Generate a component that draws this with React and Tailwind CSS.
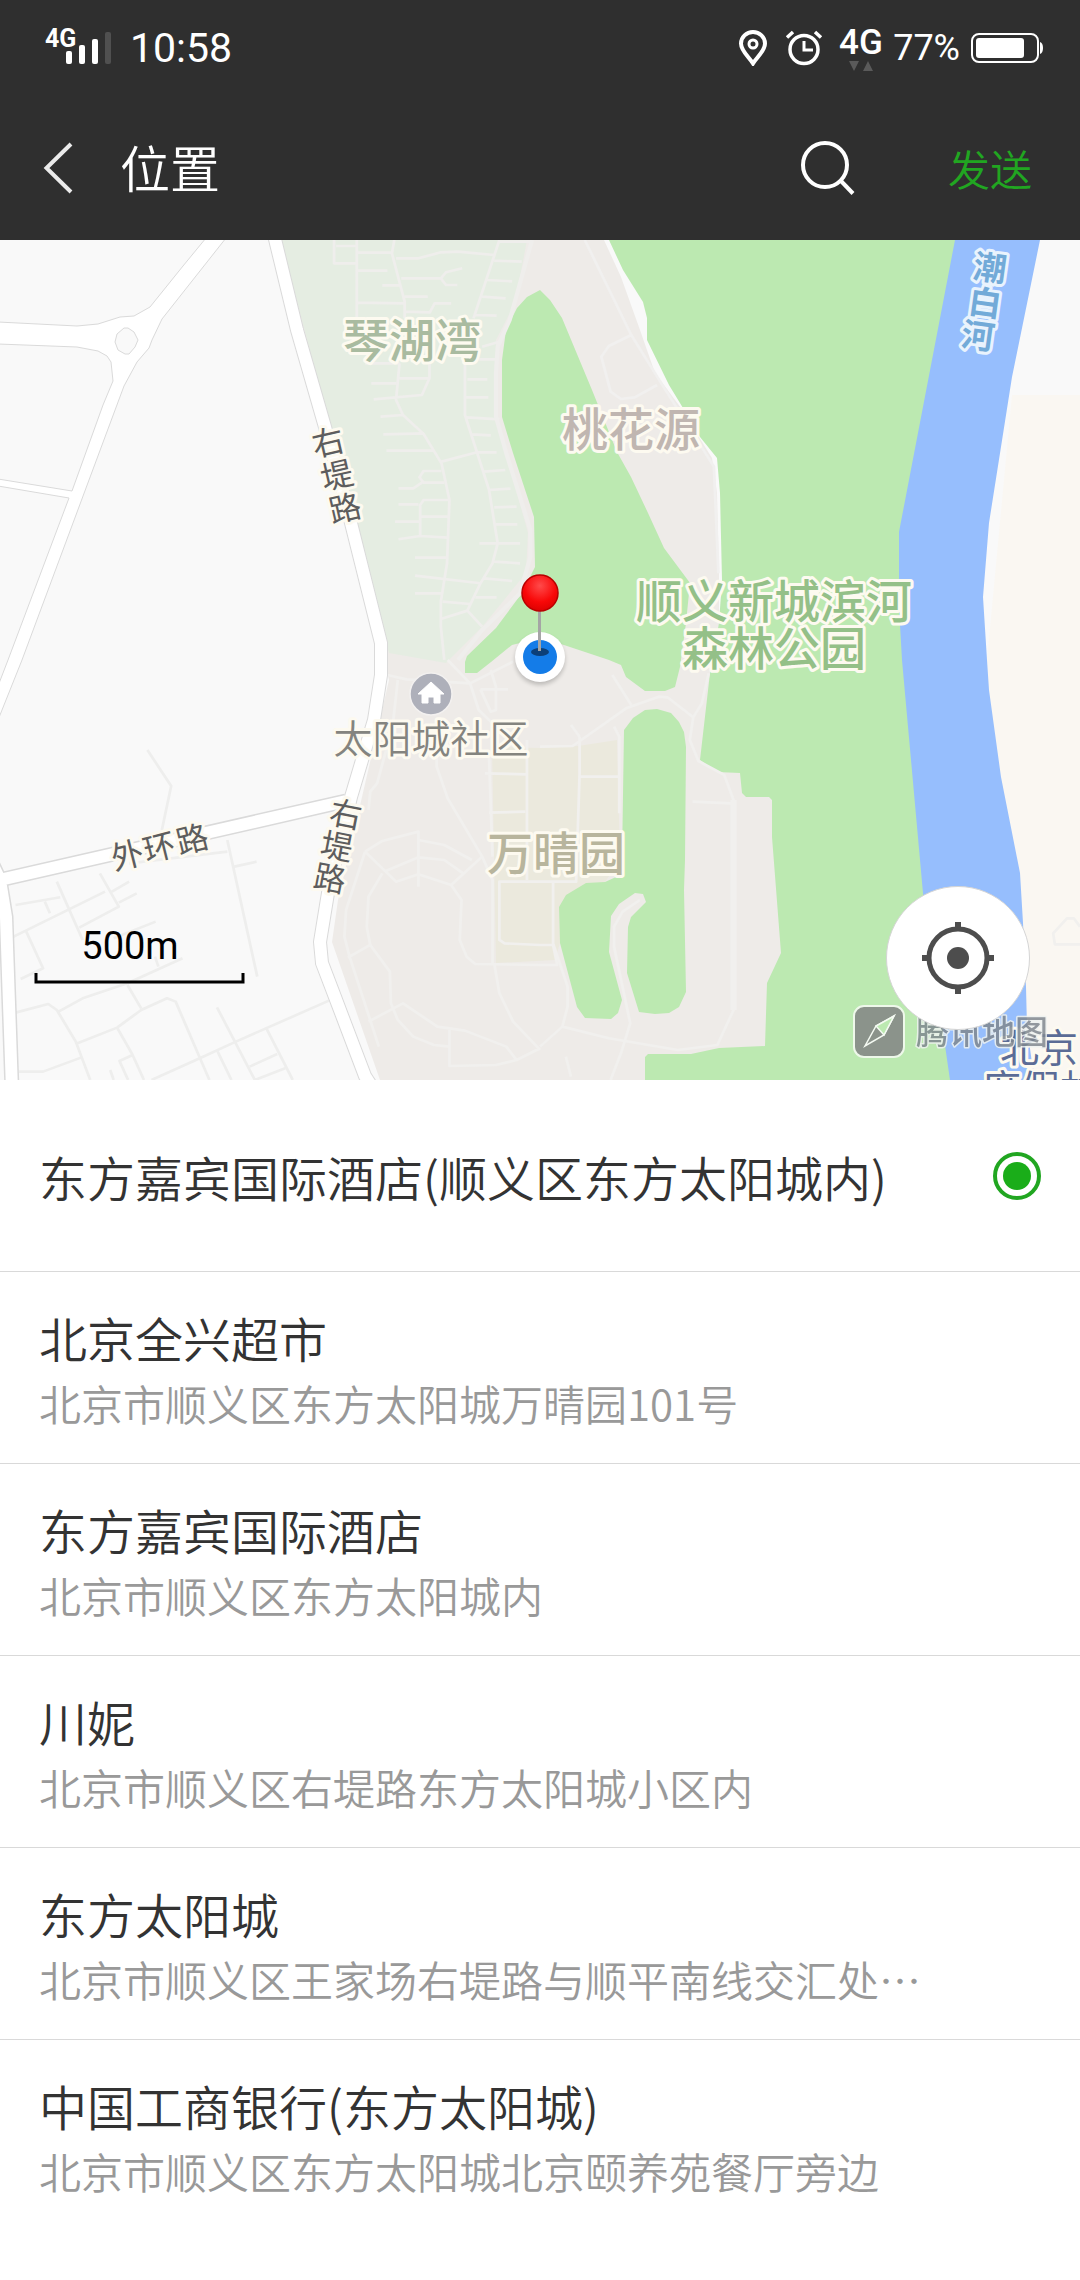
import { useState } from "react";

const places = [
  { id: 1, name: "东方嘉宾国际酒店(顺义区东方太阳城内)" },
  {
    id: 2,
    name: "北京全兴超市",
    address: "北京市顺义区东方太阳城万晴园101号",
  },
  {
    id: 3,
    name: "东方嘉宾国际酒店",
    address: "北京市顺义区东方太阳城内",
  },
  {
    id: 4,
    name: "川妮",
    address: "北京市顺义区右堤路东方太阳城小区内",
  },
  {
    id: 5,
    name: "东方太阳城",
    address: "北京市顺义区王家场右堤路与顺平南线交汇处…",
  },
  {
    id: 6,
    name: "中国工商银行(东方太阳城)",
    address: "北京市顺义区东方太阳城北京颐养苑餐厅旁边",
  },
];

const areaLabels = [
  { text: "琴湖湾", x: 412, y: 117, color: "#a9bba0" },
  { text: "桃花源", x: 631, y: 206, color: "#c0b6b1" },
  { text: "顺义新城滨河", x: 774, y: 378, color: "#94c088" },
  { text: "森林公园", x: 774, y: 425, color: "#94c088" },
  { text: "万晴园", x: 556, y: 630, color: "#b8b59d" },
];

const roadLabels = [
  { char: "右", x: 328, y: 202, rotate: -13 },
  { char: "堤", x: 337, y: 235, rotate: -13 },
  { char: "路", x: 345, y: 268, rotate: -13 },
  { char: "右", x: 346, y: 574, rotate: 11 },
  { char: "堤", x: 337, y: 606, rotate: 11 },
  { char: "路", x: 330, y: 638, rotate: 11 },
  { char: "外", x: 127, y: 615, rotate: -14 },
  { char: "环", x: 159, y: 607, rotate: -14 },
  { char: "路", x: 192, y: 599, rotate: -14 },
];

const riverLabels = [
  { char: "潮", x: 990, y: 28, rotate: 8 },
  { char: "白", x: 985, y: 63, rotate: 8 },
  { char: "河", x: 978, y: 96, rotate: 8 },
];

function StatusBar() {
  return (
    <div className="flex h-24 items-center justify-between pr-9 pl-11">
      <div className="flex items-center gap-[18px]">
        <svg viewBox="0 0 68 40" className="h-10 w-[68px] overflow-visible" fill="#fff">
          <text x="1" y="19" fontSize="25" fontWeight="700">
            4G
          </text>
          <rect x="22" y="23" width="6" height="13" rx="2" />
          <rect x="35" y="17" width="6" height="19" rx="2" />
          <rect x="48" y="11" width="6" height="25" rx="2" />
          <rect x="61" y="4" width="6" height="32" rx="2" fill="#505050" />
        </svg>
        <span className="text-[41px] leading-10">10:58</span>
      </div>
      <div className="flex items-center">
        <svg viewBox="0 0 28 36" className="mr-[18px] h-9 w-7" fill="none" stroke="#fff">
          <path d="M14 33.5C10 27 2 21 2 13.500A12 11.500 0 0 1 26 13.500C26 21 18 27 14 33.500Z" strokeWidth="4" />
          <circle cx="14" cy="14" r="4" strokeWidth="3" />
        </svg>
        <svg viewBox="0 0 38 36" className="mr-4 h-9 w-[38px]" fill="none" stroke="#fff">
          <circle cx="19" cy="19.500" r="14" strokeWidth="3.500" />
          <path d="M19 11V20H28" strokeWidth="3" />
          <path d="M2 7.500L8 2M36 7.500L30 2" strokeWidth="3.500" />
        </svg>
        <svg viewBox="0 0 46 48" className="mr-2 h-12 w-[46px] overflow-visible" fill="#fff">
          <text x="0" y="30" fontSize="35" fontWeight="500">
            4G
          </text>
          <path d="M10 37H20L15 47Z M24 47H34L29 37Z" fill="#5a5a5a" />
        </svg>
        <span className="text-4xl leading-10">77%</span>
        <svg viewBox="0 0 74 32" className="ml-2.5 h-8 w-[74px]" fill="none">
          <rect x="2" y="2" width="66" height="28" rx="7" stroke="#fff" strokeWidth="2" />
          <rect x="6" y="6" width="48" height="20" rx="3" fill="#fff" />
          <path d="M70 10Q73 11 73 16Q73 21 70 22Z" fill="#fff" />
        </svg>
      </div>
    </div>
  );
}

function NavBar() {
  return (
    <div className="flex h-36 items-center pr-12 pl-[42px]">
      <button type="button" aria-label="返回" className="mr-[46px]">
        <svg viewBox="0 0 32 52" className="h-[52px] w-8" fill="none">
          <path d="M29 2L4.500 26L29 50" stroke="#ebebeb" strokeWidth="4" />
        </svg>
      </button>
      <h1 className="grow pb-1 text-[50px] leading-[72px] font-[350]">位置</h1>
      <button type="button" aria-label="搜索" className="mr-[92px]">
        <svg viewBox="0 0 56 56" className="size-14" fill="none" stroke="#fff" strokeWidth="4">
          <circle cx="25" cy="25" r="22" />
          <path d="M41 41L53 53.500" />
        </svg>
      </button>
      <button type="button" className="text-[42px] leading-[60px] font-[350] text-[#21a621]">
        发送
      </button>
    </div>
  );
}

function MinorRoads() {
  return (
    <g fill="none" strokeWidth="8" strokeLinejoin="round">
      <g transform="scale(.3444 .3333)" stroke="#efeeec">
        <path d="M1036 0V235M970 0V70H1036M976 18H1036M1036 38H1140M1145 0L1138 40L1175 185V235M1150 55H1215L1280 37L1330 35L1435 45M1036 92H1125M1165 115H1280L1295 97L1342 85M1280 115L1295 135H1328M1110 136H1165M1036 188L1175 190M1175 170H1242M1175 215L1248 217L1262 190H1310" />
        <path d="M1450 0L1375 235M1450 5H1540M1435 62L1515 65M1415 120L1487 124M1400 170L1468 175M1380 225L1442 227M1400 320L1450 305M1060 370H1160M1390 358H1440" />
        <path d="M1160 370L1150 480L1170 525L1230 582L1282 670L1305 780L1298 970L1280 1085V1160L1290 1260M1078 430H1150M1160 415H1247M1247 370V415L1225 465L1085 478M1105 530L1170 525M1113 583L1230 580M1122 632H1260M1282 665L1385 637" />
        <path d="M1350 370V525L1385 637L1420 750L1445 910L1430 970L1395 1030L1357 1112L1280 1137M1357 1112L1400 1160M1357 418H1415M1350 472H1418M1355 532L1450 538M1370 583L1425 586M1385 637H1442M1405 695L1467 690M1420 750L1482 746M1435 802L1500 800M1440 853H1502M1392 910H1510M1435 965L1510 970M1405 1015L1487 1023" />
        <path d="M1205 1007L1395 1030M1205 953H1298M1205 1060H1285M1285 1085L1365 1092M1380 1072H1442M1282 693H1230L1218 712L1230 728H1290M1157 745H1200L1225 728M1157 793H1215M1303 780H1230L1220 795V890M1220 830H1303M1147 845H1220M1157 898L1220 888L1300 893" />
        <path d="M1545 0L1480 240L1445 320L1440 400V530L1470 640L1540 870V950L1510 1060L1400 1170L1330 1260" strokeWidth="12" />
      </g>
      <g transform="translate(540 0) scale(.3444 .3333)" stroke="#f1f0ef">
        <path d="M130 0L265 285L340 410L505 680L518 1000M265 285L200 318L178 350L205 455L235 477L275 472L340 435" />
      </g>
      <g transform="translate(0 420) scale(.3444 .3333)" stroke="#eeeeed">
        <path d="M428 270L497 378L470 510M375 610L660 575M660 540L747 950M680 620L745 605M290 640L345 740L230 803M165 665L240 840M45 735L175 712M130 725L145 760M375 665L325 695M397 700L345 728M305 695L75 812L0 850M75 812L125 925L60 957M452 785L330 835" />
        <path d="M530 895L370 970L240 1015L170 1055M370 975L410 1045M450 890L460 920M45 1058L140 1032L165 1050L220 1145L262 1260M225 1150L340 1103L410 1050L485 1015L510 1025L608 1260M340 1103L385 1185L418 1260M55 1235H125L235 1193M385 1185L347 1203L372 1260M320 1230L330 1260" />
        <path d="M440 1260L580 1195L685 1145L955 1022M630 1042L740 1260M775 1108L850 1260M725 1220L805 1182M740 1260L828 1225M632 1175L672 1260" />
      </g>
      <g transform="translate(0 420) scale(.3444 .3333)" stroke="#f1f0ee">
        <path d="M1125 45L1180 58L1365 70L1490 5M1300 0L1365 70L1390 150L1430 190M1155 60L1140 200L1095 370L1075 395L1070 450M1268 290V320L1300 415L1400 590L1430 660V910M1408 340L1530 343M1420 458L1525 455M1530 240V660M1420 290L1430 590M1568 665H1450V840L1465 850L1568 855" />
        <path d="M1060 575L1110 543L1215 515V680M1120 633L1215 592L1290 600L1345 640M1060 575L1150 665L1215 643L1310 675L1400 590M1215 540L1290 555L1370 600M1310 675L1340 720L1335 840L1355 890L1380 912L1568 915M1060 575L1005 750L1000 830L1015 890L1100 1160M1110 640L1070 710L1065 800L1075 855L1010 893" />
        <path d="M1075 855L1132 935L1135 1030L1155 1080L1200 1130L1260 1155L1305 1160M1070 1085L1170 1030L1270 1100L1350 1112L1470 1160L1500 1200L1440 1215L1305 1218V1108M1435 910L1450 1000L1490 1085L1568 1170M1500 1200L1568 1165M1395 88H1475M1425 30L1440 80V150L1425 155L1395 88" />
      </g>
      <g transform="translate(540 420) scale(.3444 .3333)" stroke="#f1f0ee">
        <path d="M0 260L95 258L250 145L345 110L370 112L445 172L435 240L460 303L535 345L562 420V1050L515 1155L400 1170L200 1135L65 1100L80 1040V980L38 850V665M490 40L470 130L443 175M210 45L265 135M115 230V340L105 665H0M215 200L230 230V460M90 195L115 230M115 350H230M443 425L555 430" />
        <path d="M290 720L240 755L215 800V860L262 1090L235 1180L205 1260M65 1100L0 1160M0 855H38L50 915H0M75 1190L90 1250" />
        <path d="M562 420V1050" strokeWidth="18" />
        <path d="M1568 800L1550 775H1530L1490 820L1495 853H1568" />
      </g>
    </g>
  );
}

function MapCanvas() {
  return (
    <svg
      viewBox="0 0 1080 840"
      preserveAspectRatio="xMidYMid slice"
      className="block size-full"
    >
      <defs>
        <radialGradient id="pin" cx=".5" cy=".3" r=".75">
          <stop offset="0" stopColor="#ff4a4a" />
          <stop offset=".6" stopColor="#f80808" />
          <stop offset="1" stopColor="#d80000" />
        </radialGradient>
        <filter id="soft" x="-50%" y="-50%" width="200%" height="200%">
          <feGaussianBlur stdDeviation="2" />
        </filter>
      </defs>
      <rect width="1080" height="840" fill="#f9f9f9" />

      {/* land */}
      <path
        d="M281 0H604L621 37L640 90L655 133L681 168L712 218L717 253L719 333V420H790V818H648V840H380L332 702L338 660L362 557L389 440Z"
        fill="#eeebe8"
      />
      <path
        d="M281 0H527L515 63L496 100V177L528 293L526 333L482 387L446 423L389 413Z"
        fill="#e5ede2"
      />
      <path d="M987 420L1012 155H1080V840H1000Z" fill="#faf7f2" />
      <path
        d="M492 507L540 508L578 506L617 500L620 620L605 642L559 667L560 703L555 720L496 723Z"
        fill="#ebe9dd"
      />

      {/* parks */}
      <path
        d="M609 0L623 30L643 62L647 78V100L669 145L683 168L700 197L717 218L720 253L722 340L719 383L710 433L700 520L717 532L740 533L742 553L746 557H769L772 560V597L781 713L767 743L765 806L719 808L691 814H648L645 817V840H955L960 0Z"
        fill="#bce9b1"
      />
      <path
        d="M540 50L527 57L517 68L506 90L502 120V177L513 213L534 277L535 327L522 353L496 388L467 416L465 422V433H477L491 422L512 405L540 398L564 405L609 420L621 425L626 437L645 451H665L675 447L680 427L686 383L690 343L664 308L648 273L631 237L617 212L592 150L562 78L550 60Z"
        fill="#bce9b1"
      />
      <path
        d="M657 469L671 473L679 482L684 492L686 507L685 620L684 650L686 752L679 767L669 773L655 774L639 772L627 733L628 687L631 677L646 662L643 654L635 653L619 664L611 676L609 712L622 760L618 773L611 779L585 778L577 767L560 703L559 667L566 655L586 643L605 642L616 637L622 620L624 490L633 478L645 470Z"
        fill="#bce9b1"
      />

      {/* river */}
      <path
        d="M955 0H1040L1012 137L989 283L983 357L987 420L989 450L1001 537L1020 633L1023 683L1026 747L1027 787L1032 823L1036 840H950L923 653L902 420L899 367V292Z"
        fill="#96befd"
      />

      <MinorRoads />

      {/* main roads */}
      <path d="M-8 623L0 640L6 677L12 850M0 640L346 561" fill="none" stroke="#dadada" strokeWidth="15" />
      <path d="M274 -5L297 90L325 187L351 283L381 403V435L374 480L351 557L328 653L320 702L322 723L335 757L365 836L374 850" fill="none" stroke="#dadada" strokeWidth="14" />
      <path
        d="M206 -2L183 26L150 67L134 76L120 77L98 84L77 86L-2 82V104L77 107L98 111L107 116L111 122L113 141L103 165L72 251L-2 239V246L69 258L8 420L-2 446V480L22 420L124 146L137 122L149 108L152 100L162 79L226 -2Z"
        fill="#fff"
        stroke="#dadada"
      />
      <path
        d="M117 94L124 88H128L134 92L138 100L135 107L129 114H125L118 110L115 102Z"
        fill="#f9f9f9"
        stroke="#dadada"
      />
      <path d="M-8 623L0 640L6 677L12 850M0 640L346 561" fill="none" stroke="#fff" strokeWidth="12" />
      <path d="M274 -5L297 90L325 187L351 283L381 403V435L374 480L351 557L328 653L320 702L322 723L335 757L365 836L374 850" fill="none" stroke="#fff" strokeWidth="12" />

      {/* labels */}
      <g
        textAnchor="middle"
        stroke="#fdfaf0"
        strokeWidth="6"
        strokeLinejoin="round"
        paintOrder="stroke"
      >
        {areaLabels.map((item) => (
          <text key={item.text} x={item.x} y={item.y} fontSize="46" fontWeight="500" fill={item.color}>
            {item.text}
          </text>
        ))}
        <text x="431" y="513" fontSize="39" fontWeight="350" fill="#84847f">
          太阳城社区
        </text>
        {roadLabels.map((item) => (
          <text
            key={`${item.x}-${item.y}`}
            transform={`translate(${item.x} ${item.y}) rotate(${item.rotate})`}
            y="12"
            fontSize="32"
            fill="#5d5d5d"
          >
            {item.char}
          </text>
        ))}
        <g stroke="#e9f3fd" fill="#72aad8" fontWeight="700">
          {riverLabels.map((item) => (
            <text
              key={item.char}
              transform={`translate(${item.x} ${item.y}) rotate(${item.rotate})`}
              y="12"
              fontSize="33"
            >
              {item.char}
            </text>
          ))}
        </g>
        <g fontSize="39" fill="#5b6c96" textAnchor="start">
          <text x="1000" y="822">北京</text>
          <text x="982" y="863">度假村</text>
        </g>
        <g opacity=".85">
          <text x="982" y="804" fontSize="33" fontWeight="500" fill="#808890" stroke="#eef2f0" strokeWidth="3">
            腾讯地图
          </text>
        </g>
      </g>

      <rect x="854" y="766" width="50" height="51" rx="10" fill="#8b938b" stroke="#eef8ea" strokeWidth="2" />
      <path d="M894 776L876 786L865 806L884 795Z" stroke="#f4faf2" strokeWidth="1.500" fill="none" />
      <path d="M894 776L876 786L884 795Z" fill="#bce9b1" stroke="#f4faf2" strokeWidth="1.500" />

      <circle cx="431" cy="454" r="21" fill="#aeb0ba" stroke="#f3f1f0" strokeWidth="1.500" />
      <path d="M431 442L444 454H440V463H434V457H428V463H422V454H418Z" fill="#fff" stroke="#fff" strokeLinejoin="round" />

      {/* current position */}
      <ellipse cx="540" cy="420" rx="25" ry="25" fill="#000" opacity=".2" filter="url(#soft)" />
      <circle cx="540" cy="417" r="25" fill="#fff" />
      <circle cx="540" cy="417" r="17" fill="#147ce8" />
      <ellipse cx="540" cy="412" rx="9" ry="4" fill="#0c3f78" />
      <path d="M539.500 368V411" stroke="#a5a5a5" strokeWidth="3" />
      <circle cx="540" cy="353" r="18" fill="url(#pin)" stroke="#b80000" strokeWidth="1.500" />

      {/* scale */}
      <text x="130" y="719" textAnchor="middle" fontSize="38" className="font-[Roboto,sans-serif]">
        500m
      </text>
      <path d="M36 733V742H243V733" fill="none" stroke="#000" strokeWidth="3" />
    </svg>
  );
}

function Map() {
  return (
    <div className="relative h-[840px] overflow-hidden">
      <MapCanvas />
      <button
        type="button"
        aria-label="定位"
        className="absolute right-[50px] bottom-[50px] flex size-36 items-center justify-center rounded-full border border-[#d5d5d5] bg-white"
      >
        <svg viewBox="0 0 76 76" className="size-[76px]" fill="none" stroke="#4d4d4d">
          <circle cx="38" cy="38" r="29" strokeWidth="5" />
          <path d="M38 2V11M38 65V74M2 38H11M65 38H74" strokeWidth="6" />
          <circle cx="38" cy="38" r="11" fill="#4d4d4d" stroke="none" />
        </svg>
      </button>
    </div>
  );
}

function PlaceRow({ place, checked, onSelect }) {
  return (
    <label className="flex h-48 cursor-pointer items-center justify-between border-b border-[#d9d9d9] px-[39px] last:border-b-0">
      <span className="flex min-w-0 flex-col font-[350]">
        <span className="truncate text-5xl leading-[70px] text-[#333]">
          {place.name}
        </span>
        {place.address ? (
          <span className="truncate text-[42px] leading-[62px] text-[#999]">
            {place.address}
          </span>
        ) : (
          <></>
        )}
      </span>
      <input
        type="radio"
        name="place"
        checked={checked}
        onChange={onSelect}
        className="size-12 shrink-0 appearance-none rounded-full border-4 border-transparent bg-clip-content p-[6px] checked:border-[#21a621] checked:bg-[#1aad19]"
      />
    </label>
  );
}

export default function App() {
  const [selected, setSelected] = useState(1);

  return (
    <div
      lang="zh-CN"
      className="min-h-screen bg-white font-['Noto_Sans_CJK_SC',sans-serif]"
    >
      <header className="bg-[#2f2f2f] text-white">
        <div className="font-[Roboto,sans-serif]">
          <StatusBar />
        </div>
        <NavBar />
      </header>
      <Map />
      <main>
        {places.map((place) => (
          <PlaceRow
            key={place.id}
            place={place}
            checked={place.id == selected}
            onSelect={() => setSelected(place.id)}
          />
        ))}
      </main>
    </div>
  );
}
